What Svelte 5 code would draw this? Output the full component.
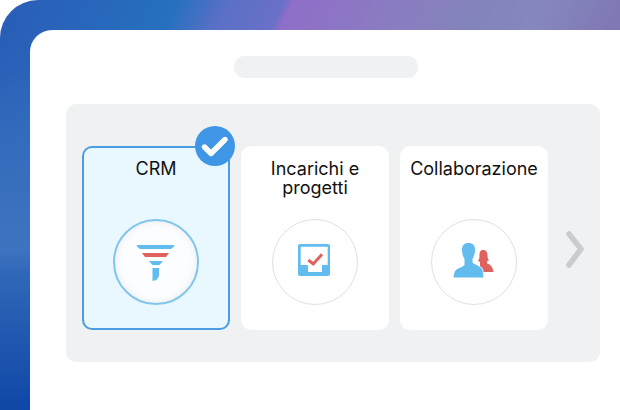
<script>
  const tiles = [
    { name: 'CRM', icon: 'funnel', active: true },
    { name: 'Incarichi e progetti', icon: 'inbox', active: false },
    { name: 'Collaborazione', icon: 'people', active: false }
  ];
</script>

<div class="stage">
  <div class="window">
    <div class="title-bar"></div>
    <div class="panel">
      {#each tiles as tile}
        <div class="tile" class:active={tile.active}>
          {#if tile.active}
            <svg class="badge" viewBox="0 0 40 40" width="40" height="40">
              <circle cx="20" cy="20" r="20" fill="#3f96e6" />
              <path d="M9.500 21l6.500 6.500L30 13.500" fill="none" stroke="#fff" stroke-width="5.400" stroke-linecap="round" stroke-linejoin="round" />
            </svg>
          {/if}
          <div class="label">{tile.name}</div>
          <div class="circle">
            {#if tile.icon === 'funnel'}
              <svg viewBox="0 0 40 40" width="40" height="40">
                <path d="M1.500 3h36a1 1 0 0 1 .5 1.500L35 7H4L1 4.500A1 1 0 0 1 1.500 3z" fill="#62bdee" />
                <path d="M6 11h27l-3 4H9z" fill="#e0625f" />
                <path d="M13 19h14l-3.500 4h-7z" fill="#62bdee" />
                <path d="M16.500 26H23v8l-2.500 4-4 1z" fill="#62bdee" />
              </svg>
            {:else if tile.icon === 'inbox'}
              <svg viewBox="0 0 40 40" width="40" height="40">
                <rect x="3" y="2" width="32" height="32" rx="2" fill="#62bdee" />
                <path d="M5.700 4.700h27V23H27v7H13v-7H5.700z" fill="#fff" />
                <path d="M13.300 18l5 4L27 12.300" fill="none" stroke="#e0625f" stroke-width="3" />
              </svg>
            {:else}
              <svg viewBox="0 0 44 40" width="44" height="40">
                <path d="M31 8c3.500 0 4.500 2.500 4.500 5.500 0 2 .5 3.500 1.500 4.500-.8.8-1.500 1.200-2 1.300v2c2 1 5.500 2 6.500 8.700H28V20c-1-.3-1.500-.8-2-1.500 1-1 1.500-2.500 1.500-5 0-3 .5-5.500 3.500-5.500z" fill="#e0625f" />
                <path d="M16.500 1c4.500 0 6.500 2.500 6.500 6.500 0 4-1 7-2.500 9.500v3.500c1.500 2 9 3.500 10 7.500l1 7.500H1.500c.5-4 1-6 2.500-7.500 2-2 7-3 8.500-5v-6c-1.500-2.500-2.500-5.500-2.500-9C10 3.500 12 1 16.500 1z" fill="#62bdee" stroke="#fff" stroke-width="1.500" paint-order="stroke" />
              </svg>
            {/if}
          </div>
        </div>
      {/each}
      <svg class="chevron" viewBox="0 0 20 40" width="20" height="40">
        <path d="M4 4l12 15L4 35" fill="none" stroke="#c9cbcd" stroke-width="5.500" stroke-linecap="round" stroke-linejoin="round" />
      </svg>
    </div>
  </div>
</div>

<style>
  :global(body) {
    margin: 0;
    background: #fff;
  }

  .stage {
    width: 620px;
    height: 410px;
    box-sizing: border-box;
    padding: 30px 0 0 30px;
    overflow: hidden;
    border-top-left-radius: 38px;
    background:
      linear-gradient(180deg, rgba(58, 112, 189, 0) 60px, #3a70bd 200px, #3d73bf 250px, #3068b8 272px, #1048a8 405px),
      linear-gradient(116deg, #2a5cb6 0, #2670bf 160px, #5a70c6 205px, #6a70c8 256px, #8f6ec8 264px, #8a7cc1 360px, #8285ba 440px, #8688bd 490px, #7f78b5 560px);
    font-family: Inter, "Liberation Sans", sans-serif;
  }

  .window {
    height: 380px;
    box-sizing: border-box;
    padding: 26px 20px 0 36px;
    background: #fff;
    border-radius: 22px 0 0 0;
  }

  .title-bar {
    width: 184px;
    height: 22px;
    margin: 0 0 26px 168px;
    border-radius: 10px;
    background: #eff1f2;
  }

  .panel {
    height: 258px;
    box-sizing: border-box;
    padding: 42px 16px 0;
    display: flex;
    align-items: flex-start;
    gap: 11px;
    border-radius: 10px;
    background: #eff1f2;
  }

  .tile {
    width: 148px;
    height: 184px;
    flex: none;
    box-sizing: border-box;
    padding-top: 13px;
    display: flex;
    flex-direction: column;
    align-items: center;
    position: relative;
    border-radius: 10px;
    background: #fff;
  }

  .tile.active {
    padding-top: 11px;
    border: 2px solid #4a9de2;
    background: #e9f7fe;
  }

  .badge {
    position: absolute;
    top: -22px;
    right: -7px;
  }

  .label {
    height: 38px;
    color: #111;
    font-size: 18px;
    line-height: 19px;
    text-align: center;
    width: 136px;
  }

  .circle {
    width: 86px;
    height: 86px;
    margin-top: 22px;
    box-sizing: border-box;
    display: flex;
    align-items: center;
    justify-content: center;
    border: 1px solid #e0e0e0;
    border-radius: 50%;
    background: #fff;
  }

  .tile.active .circle {
    border: 2px solid #80c6ec;
    box-shadow: inset 0 0 8px rgba(0, 0, 0, 0.08);
    background: #fbfdfe;
  }

  .chevron {
    flex: none;
    margin: 84px 0 0 6px;
  }
</style>
